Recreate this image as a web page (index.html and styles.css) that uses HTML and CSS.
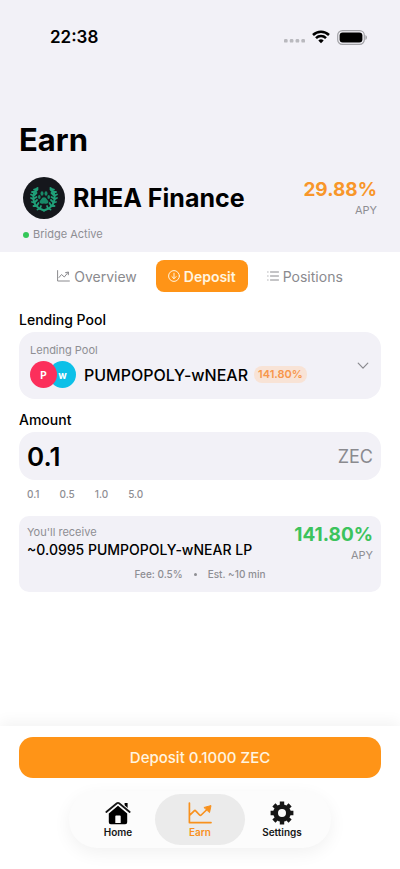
FILE: index.html
```html
<!DOCTYPE html>
<html lang="en">
<head>
    <meta charset="UTF-8">
    <meta name="viewport" content="width=device-width, initial-scale=1.0">
    <title>Earn - RHEA Finance</title>
    <link rel="stylesheet" href="styles.css">
</head>
<body>
    <header class="header">
        <div class="status-bar">
            <span class="time">22:38</span>
            <div class="status-icons">
                <svg class="signal" width="21" height="4" viewBox="0 0 21 4" fill="#b9b9be">
                    <rect x="0" y="0" width="3.6" height="3.6" rx="1.2"/>
                    <rect x="5.8" y="0" width="3.6" height="3.6" rx="1.2"/>
                    <rect x="11.6" y="0" width="3.6" height="3.6" rx="1.2"/>
                    <rect x="17.4" y="0" width="3.6" height="3.6" rx="1.2"/>
                </svg>
                <svg width="18" height="14" viewBox="0 0 18 14" fill="none" stroke="#000" stroke-width="2.5">
                    <path d="M1 5 C5.5 .6 12.5 .6 17 5"/>
                    <path d="M4 8.1 C6.8 5.3 11.2 5.3 14 8.1"/>
                    <path d="M6.3 10.5 Q9 8.2 11.7 10.5 L9 13.2 Z" fill="#000" stroke="none"/>
                </svg>
                <svg width="30" height="15" viewBox="0 0 30 15">
                    <rect x=".7" y=".7" width="26.6" height="13.6" rx="4.6" fill="none" stroke="#a2a2a7" stroke-width="1.2"/>
                    <rect x="2.6" y="2.5" width="22.8" height="10" rx="3"/>
                    <path d="M28.4 5 v5 q1.6 -.8 1.6 -2.5 t-1.6 -2.5z" fill="#a2a2a7"/>
                </svg>
            </div>
        </div>

        <h1>Earn</h1>

        <div class="protocol">
            <svg class="logo" width="42" height="42" viewBox="0 0 42 42">
                <circle cx="21" cy="21" r="21" fill="#15171c"/>
                <g fill="none" stroke="#1f9f78" stroke-linecap="round">
                    <path d="M14.500 11 C8.500 17 9 27 16.500 31.500 L21 33.500" stroke-width="2"/>
                    <path d="M27.500 11 C33.500 17 33 27 25.500 31.500 L21 33.500" stroke-width="2"/>
                    <path d="M13 12 l-2 .5 M11 15 l-2 0 M10 18.500 l-2 -1 M10 22 l-2 -1 M11 25.500 l-2 -.5 M13 29 l-2.500 0 M16.500 31.500 l-2 1 M12.500 14.500 l2 -2 M11.500 18 l2 -2 M11 21.500 l2.500 -1.500 M12 25 l2 -2 M14 28.500 l1.500 -2.500 M17 31.500 l1 -2.500" stroke-width="1.800"/>
                    <path d="M29 12 l2 .5 M31 15 l2 0 M32 18.500 l2 -1 M32 22 l2 -1 M31 25.500 l2 -.5 M29 29 l2.500 0 M25.500 31.500 l2 1 M29.500 14.500 l-2 -2 M30.500 18 l-2 -2 M31 21.500 l-2.500 -1.500 M30 25 l-2 -2 M28 28.500 l-1.500 -2.500 M25 31.500 l-1 -2.500" stroke-width="1.800"/>
                </g>
                <g fill="#188a68">
                    <ellipse cx="19" cy="16.500" rx="1.500" ry="2.300"/>
                    <ellipse cx="23" cy="16.500" rx="1.500" ry="2.300"/>
                    <ellipse cx="16.300" cy="20" rx="1.300" ry="2"/>
                    <ellipse cx="25.700" cy="20" rx="1.300" ry="2"/>
                    <path d="M21 20.200 q2 0 3 2.300 q2.300 1.800 1 3.600 q-1.300 1.300 -4 .3 q-2.700 1 -4 -.3 q-1.300 -1.800 1 -3.600 q1 -2.300 3 -2.300z"/>
                </g>
            </svg>
            <h2>RHEA Finance</h2>
            <div class="rate">
                <strong class="rate-value">29.88%</strong>
                <span class="rate-label">APY</span>
            </div>
        </div>

        <p class="bridge"><span class="dot"></span>Bridge Active</p>
    </header>

    <nav class="tabs">
        <button class="tab" type="button">
            <svg width="13" height="12" viewBox="0 0 13 12" fill="none" stroke="currentColor" stroke-linecap="round" stroke-linejoin="round">
                <path d="M.6 .6 V11 H12.400 M2 7.500 L4.500 4.500 L7.300 7 L11 2.500 M8.600 2.600 L11.500 2 L11.300 4.800"/>
            </svg>
            Overview
        </button>
        <button class="tab active" type="button">
            <svg width="12" height="12" viewBox="0 0 12 12" fill="none" stroke="currentColor" stroke-linecap="round" stroke-linejoin="round">
                <circle cx="6" cy="6" r="5.400"/>
                <path d="M6 3.200 V8.600 M3.900 6.600 L6 8.700 L8.100 6.600"/>
            </svg>
            Deposit
        </button>
        <button class="tab" type="button">
            <svg width="12" height="10" viewBox="0 0 12 10" fill="none" stroke="currentColor" stroke-linecap="round">
                <path d="M3.500 1 H11.500 M3.500 5 H11.500 M3.500 9 H11.500 M.8 1 H1 M.8 5 H1 M.8 9 H1"/>
            </svg>
            Positions
        </button>
    </nav>

    <main class="content">
        <h3>Lending Pool</h3>
        <div class="pool">
            <div class="pool-info">
                <label for="pool">Lending Pool</label>
                <div class="pool-row">
                    <span class="token token-p">P</span>
                    <span class="token token-w">w</span>
                    <select id="pool">
                        <option>PUMPOPOLY-wNEAR</option>
                    </select>
                    <span class="badge">141.80%</span>
                </div>
            </div>
            <svg width="12" height="8" viewBox="0 0 12 8" fill="none" stroke="#8a8a8f" stroke-width="1.200" stroke-linecap="round" stroke-linejoin="round">
                <path d="M1.200 1.200 L6 6.200 L10.800 1.200"/>
            </svg>
        </div>

        <h3><label for="amount">Amount</label></h3>
        <div class="amount-box">
            <input type="text" id="amount" inputmode="decimal" value="0.1">
            <span class="unit">ZEC</span>
        </div>
        <div class="presets">
            <button type="button">0.1</button>
            <button type="button">0.5</button>
            <button type="button">1.0</button>
            <button type="button">5.0</button>
        </div>

        <section class="summary">
            <div class="summary-top">
                <div>
                    <p class="summary-label">You'll receive</p>
                    <p class="summary-value">~0.0995 PUMPOPOLY-wNEAR LP</p>
                </div>
                <div class="rate green">
                    <strong class="rate-value">141.80%</strong>
                    <span class="rate-label">APY</span>
                </div>
            </div>
            <p class="summary-fee"><span>Fee: 0.5%</span><span class="separator"></span><span>Est. ~10 min</span></p>
        </section>
    </main>

    <footer class="footer">
        <button class="deposit-btn" type="button">Deposit 0.1000 ZEC</button>

        <nav class="tab-bar">
            <a href="#home">
                <svg width="26" height="24" viewBox="0 0 26 24">
                    <path d="M19.600 2 h3 v6.500 l-3 -2.600z"/>
                    <path d="M3.800 12.400 L13 4.800 L22.200 12.400 V21.200 q0 2 -2 2 H5.800 q-2 0 -2 -2z"/>
                    <path d="M1.300 11 L11.900 2.200 q1.100 -.8 2.200 0 L24.700 11" fill="none" stroke="#fcfcfc" stroke-width="3.600"/>
                    <path d="M1.300 11 L11.900 2.200 q1.100 -.8 2.200 0 L24.700 11" fill="none" stroke="currentColor" stroke-width="1.800" stroke-linecap="round"/>
                    <path d="M10.300 22 V15.400 q0 -.8 .8 -.8 h3.800 q.8 0 .8 .8 V22z" fill="#fcfcfc"/>
                </svg>
                Home
            </a>
            <a class="active" href="#earn">
                <svg width="26" height="24" viewBox="0 0 26 24" fill="none" stroke="currentColor" stroke-width="1.700" stroke-linecap="round" stroke-linejoin="round">
                    <path d="M2.400 2 V21.600 H24 M2.800 14.200 L7.200 9.800 Q8 9 8.700 9.800 L12.600 14 Q13.400 14.800 14.200 14 L20.500 8"/>
                    <path d="M17.300 6.400 L24 4.600 L22.600 11.200z" fill="currentColor" stroke-width="1"/>
                </svg>
                Earn
            </a>
            <a href="#settings">
                <svg width="26" height="24" viewBox="0 0 26 24" fill="none" stroke="currentColor">
                    <circle cx="13" cy="12" r="6.400" stroke-width="4.800"/>
                    <path d="M13 .6 V4 M13 20 V23.400 M1.600 12 H5 M21 12 H24.400 M4.900 3.900 L7.300 6.300 M18.700 17.700 L21.100 20.100 M4.900 20.100 L7.300 17.700 M18.700 6.300 L21.100 3.900" stroke-width="4.400"/>
                </svg>
                Settings
            </a>
        </nav>
    </footer>
</body>
</html>
```

FILE: styles.css
```css
* {
    margin: 0;
    padding: 0;
    box-sizing: border-box;
    font-family: Inter, "Liberation Sans", sans-serif;
}

body {
    background-color: #fff;
    color: #000;
    min-height: 100vh;
    display: flex;
    flex-direction: column;
}

button,
select,
input {
    border: none;
    background: none;
    color: inherit;
}

button,
select {
    cursor: pointer;
}

svg {
    flex-shrink: 0;
}

.header {
    background-color: #f2f1f7;
    padding: 26px 19px 10px;
}

.status-bar {
    display: flex;
    justify-content: space-between;
    align-items: center;
    height: 22px;
    padding: 0 14px 0 31px;
    margin-bottom: 72px;
}

.time {
    font-size: 17px;
    font-weight: 600;
}

.status-icons {
    display: flex;
    align-items: center;
    gap: 7px;
}

.signal {
    margin-top: 8px;
}

h1 {
    font-size: 31px;
    line-height: 40px;
    font-weight: 700;
    margin-bottom: 17px;
}

.protocol {
    display: flex;
    align-items: center;
    gap: 8px;
    padding: 0 4px;
    margin-bottom: 8px;
}

h2 {
    flex: 1;
    font-size: 25px;
    line-height: 30px;
    font-weight: 700;
    white-space: nowrap;
}

.rate {
    display: flex;
    flex-direction: column;
    align-items: flex-end;
}

.rate-value {
    font-size: 19px;
    line-height: 24px;
    font-weight: 700;
    color: #f8962a;
}

.rate-label {
    font-size: 11px;
    line-height: 16px;
    color: #8e8e93;
}

.green .rate-value {
    color: #3cc35d;
}

.bridge {
    display: flex;
    align-items: center;
    gap: 4px;
    padding: 0 4px;
    font-size: 11px;
    line-height: 15px;
    color: #8e8e93;
}

.dot {
    width: 6px;
    height: 6px;
    border-radius: 50%;
    background-color: #34c759;
}

.tabs {
    display: flex;
    justify-content: center;
    gap: 7px;
    padding: 8px 0;
}

.tab {
    display: flex;
    align-items: center;
    gap: 4px;
    height: 32px;
    padding: 0 12px;
    border-radius: 8px;
    font-size: 14px;
    color: #8a8a8e;
}

.tab.active {
    background-color: #ff9417;
    color: #fff5e0;
    font-weight: 600;
}

.content {
    padding: 10px 19px 24px;
}

h3 {
    font-size: 14px;
    line-height: 20px;
    font-weight: 500;
    margin-bottom: 2px;
}

.pool {
    display: flex;
    align-items: center;
    justify-content: space-between;
    height: 67px;
    padding: 0 12px 0 11px;
    border-radius: 16px;
    background-color: #f2f1f7;
    margin-bottom: 11px;
}

.pool label {
    display: block;
    font-size: 11px;
    line-height: 15px;
    color: #8e8e93;
    margin-bottom: 3px;
}

.pool-row {
    display: flex;
    align-items: center;
}

.token {
    display: flex;
    align-items: center;
    justify-content: center;
    width: 27px;
    height: 27px;
    border-radius: 50%;
    color: #fff;
    font-size: 10px;
    font-weight: 700;
}

.token-p {
    background-color: #fc2f5b;
    z-index: 1;
}

.token-w {
    background-color: #0cc0e8;
    margin-left: -8px;
}

.pool select {
    appearance: none;
    margin-left: 8px;
    font-size: 16px;
    line-height: 22px;
    font-weight: 500;
}

.badge {
    margin-left: 5px;
    padding: 0 4px;
    border-radius: 8px;
    background-color: #f8e3d6;
    color: #f7964a;
    font-size: 11px;
    line-height: 17px;
    font-weight: 600;
}

.amount-box {
    display: flex;
    align-items: center;
    height: 48px;
    padding: 0 8px;
    border-radius: 16px;
    background-color: #f2f1f7;
}

.amount-box input {
    flex: 1;
    min-width: 0;
    font-size: 26px;
    font-weight: 600;
    outline: none;
}

.unit {
    font-size: 18px;
    color: #8a8a8f;
}

.presets {
    display: flex;
    gap: 20px;
    padding: 6px 8px;
    margin-bottom: 8px;
}

.presets button {
    font-size: 10px;
    line-height: 16px;
    font-weight: 500;
    color: #8e8e93;
}

.summary {
    padding: 7px 8px 10px;
    border-radius: 10px;
    background-color: #f2f1f7;
}

.summary-top {
    display: flex;
    justify-content: space-between;
    margin-bottom: 4px;
}

.summary-label {
    font-size: 11px;
    line-height: 19px;
    color: #8e8e93;
}

.summary-value {
    font-size: 14px;
    line-height: 16px;
    font-weight: 500;
}

.summary-fee {
    display: flex;
    justify-content: center;
    align-items: center;
    gap: 11px;
    font-size: 10px;
    line-height: 15px;
    font-weight: 500;
    color: #8e8e93;
}

.separator {
    width: 3px;
    height: 3px;
    border-radius: 50%;
    background-color: #8e8e93;
}

.footer {
    display: flex;
    flex-direction: column;
    align-items: center;
    gap: 13px;
    margin-top: auto;
    padding: 11px 19px 21px;
    background-color: #fff;
    box-shadow: 0 -4px 14px rgba(0, 0, 0, 0.05);
}

.deposit-btn {
    width: 100%;
    height: 41px;
    border-radius: 14px;
    background-color: #ff9417;
    color: #fff5e0;
    font-size: 15px;
    font-weight: 500;
}

.tab-bar {
    display: flex;
    align-items: center;
    height: 57px;
    padding: 0 4px;
    border-radius: 28px;
    background-color: #fcfcfc;
    box-shadow: 0 5px 18px rgba(0, 0, 0, 0.06);
}

.tab-bar a {
    display: flex;
    flex-direction: column;
    align-items: center;
    justify-content: center;
    width: 90px;
    height: 51px;
    margin-right: -8px;
    border-radius: 26px;
    color: #161616;
    font-size: 10px;
    line-height: 14px;
    font-weight: 600;
    text-decoration: none;
}

.tab-bar a:last-child {
    margin-right: 0;
}

.tab-bar a.active {
    background-color: #ebebeb;
    color: #f8911d;
}
```
